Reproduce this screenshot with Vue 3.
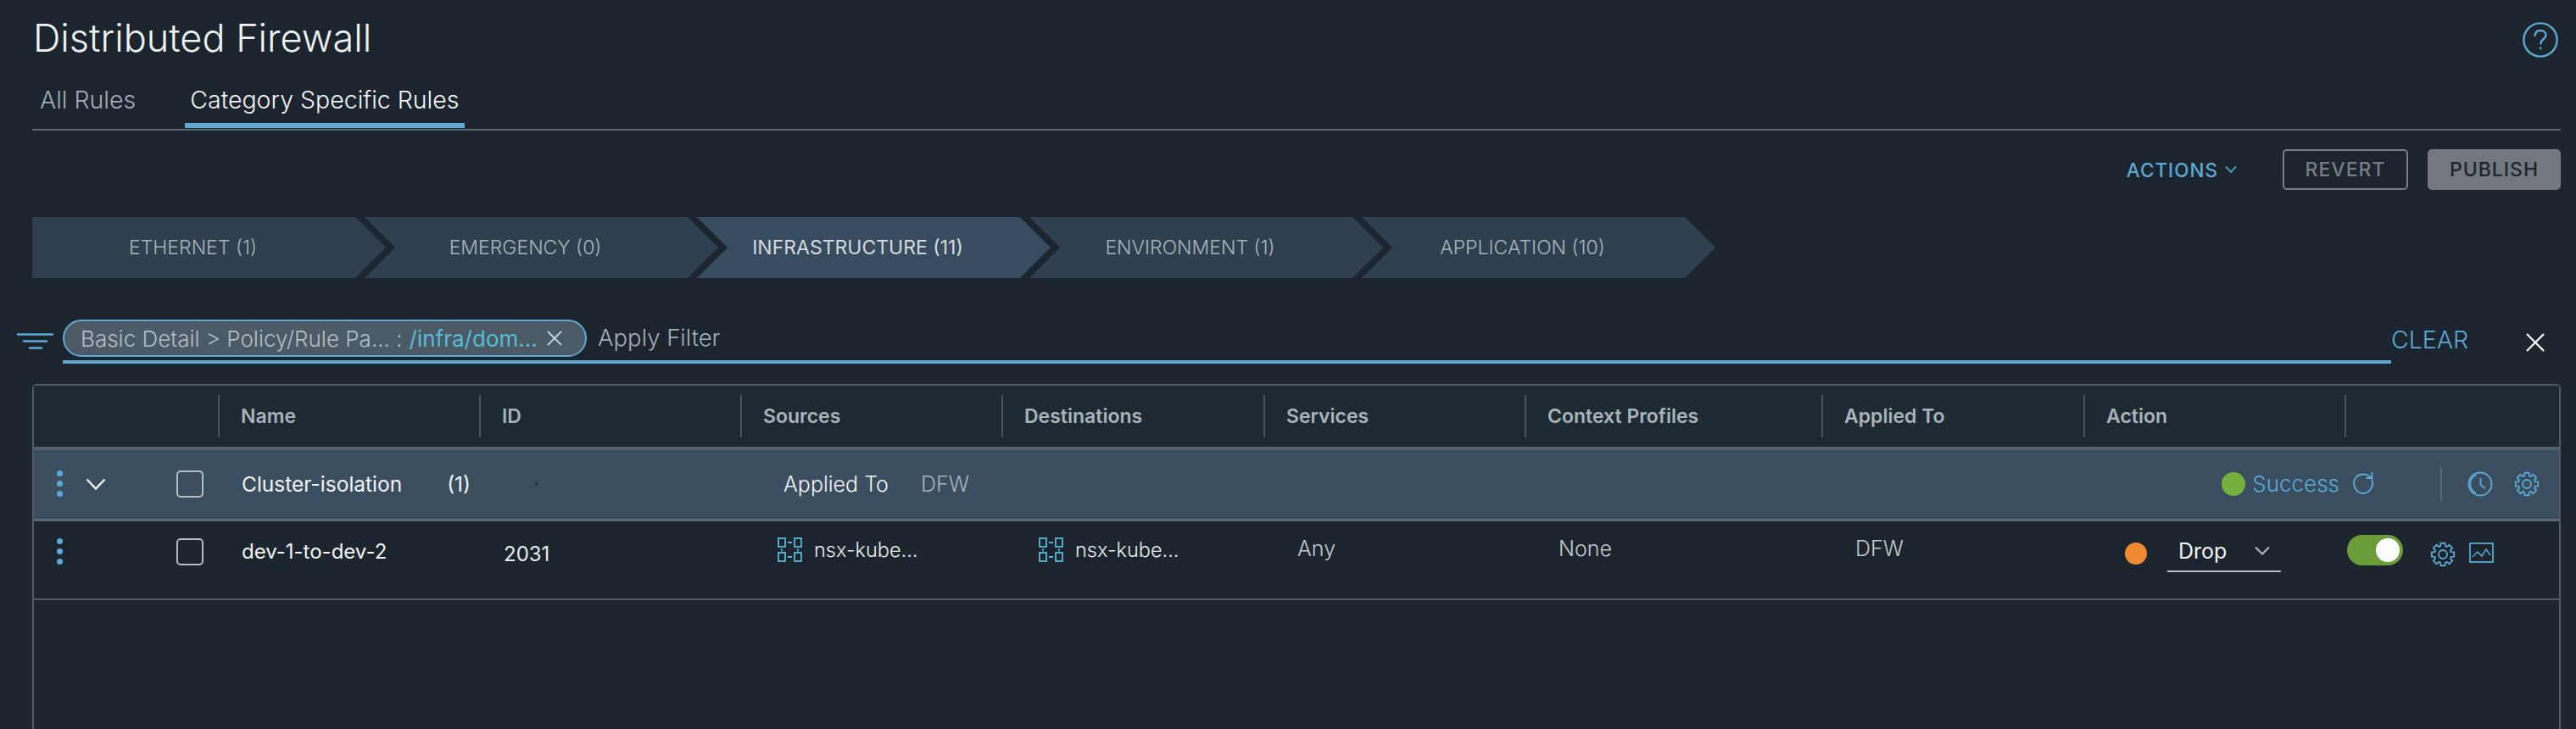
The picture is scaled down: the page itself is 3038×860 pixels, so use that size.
<script setup>
const categories = [
  { label: 'ETHERNET (1)' },
  { label: 'EMERGENCY (0)' },
  { label: 'INFRASTRUCTURE (11)', active: true },
  { label: 'ENVIRONMENT (1)' },
  { label: 'APPLICATION (10)' },
]
const columns = ['', 'Name', 'ID', 'Sources', 'Destinations', 'Services', 'Context Profiles', 'Applied To', 'Action', '']

// gear outline, 8 teeth
function gearPath(cx, cy, ro, ri) {
  const pts = []
  for (let i = 0; i < 8; i++) {
    const a = (i * Math.PI) / 4
    const w = 0.2
    const w2 = 0.3
    pts.push([a - w2, ri], [a - w, ro], [a + w, ro], [a + w2, ri])
  }
  return (
    pts
      .map(([a, r], i) => `${i ? 'L' : 'M'}${(cx + r * Math.sin(a)).toFixed(2)} ${(cy - r * Math.cos(a)).toFixed(2)}`)
      .join(' ') + ' Z'
  )
}
const gear = gearPath(15, 15, 13.5, 10)
</script>

<template>
  <div class="page">
    <header class="title-row">
      <h1>Distributed Firewall</h1>
      <svg class="help" width="42" height="42" viewBox="0 0 42 42" fill="none" stroke="#5aa9d6" stroke-width="2.4">
        <circle cx="21" cy="21" r="19.6" />
        <path d="M14.5 16c.4-4 3.2-6 6.6-6 3.6 0 6.4 2.400 6.400 5.600 0 4.600-6.200 4.800-6.200 9.600" stroke-linecap="round" />
        <circle cx="21.200" cy="31" r="1.400" fill="#5aa9d6" stroke="none" />
      </svg>
    </header>

    <nav class="tabs">
      <a class="tab">All Rules</a>
      <a class="tab active">Category Specific Rules</a>
    </nav>

    <div class="toolbar">
      <span class="actions">
        ACTIONS
        <svg width="14" height="10" viewBox="0 0 14 10" fill="none" stroke="#5aa9d6" stroke-width="1.800"><path d="M1 1.500l6 6.500 6-6.500" /></svg>
      </span>
      <button class="btn outline">REVERT</button>
      <button class="btn solid">PUBLISH</button>
    </div>

    <div class="steps">
      <div
        v-for="(c, i) in categories"
        :key="c.label"
        class="step"
        :class="{ first: i === 0, active: c.active }"
      >
        {{ c.label }}
      </div>
    </div>

    <div class="filter-row">
      <svg class="filter-icon" width="43" height="20" viewBox="0 0 43 20" fill="none" stroke="#5aa9d6" stroke-width="2.400">
        <path d="M0 1.500h43M7 9.500h29M14 17.500h16" />
      </svg>
      <div class="filter-field">
        <span class="chip">
          <span class="chip-key">Basic Detail &gt; Policy/Rule Pa... :</span>
          <span class="chip-val">/infra/dom...</span>
          <svg width="20" height="20" viewBox="0 0 20 20" fill="none" stroke="#c9d0d6" stroke-width="1.800"><path d="M2 2l16 16M18 2L2 18" /></svg>
        </span>
        <span class="placeholder">Apply Filter</span>
      </div>
      <span class="clear">CLEAR</span>
      <svg class="close" width="24" height="24" viewBox="0 0 24 24" fill="none" stroke="#f2f4f5" stroke-width="2.400"><path d="M2 2l20 20M22 2L2 22" /></svg>
    </div>

    <section class="table">
      <div class="grid head">
        <div v-for="(col, i) in columns" :key="i" class="th">{{ col }}</div>
      </div>

      <div class="grid group">
        <div class="controls">
          <span class="dots"><i></i><i></i><i></i></span>
          <svg class="caret" width="24" height="14" viewBox="0 0 24 14" fill="none" stroke="#f2f4f5" stroke-width="2.400"><path d="M1.500 1.500L12 12.500 22.500 1.500" /></svg>
          <span class="check"></span>
        </div>
        <div class="cell group-name"><span>Cluster-isolation</span><span>(1)</span></div>
        <div class="cell"><i class="speck"></i></div>
        <div class="cell applied"><span>Applied To</span><span class="muted">DFW</span></div>
        <div class="status">
          <i class="dot green"></i>
          <span class="ok">Success</span>
          <svg class="refresh" width="24" height="29" viewBox="0 0 24 29" fill="none" stroke="#5aa9d6" stroke-width="1.800">
            <path d="M22 9.500c.8 1.500 1 3 1 4.500 0 6.500-5 12-11 12S1 20.500 1 14 6 3.500 12 3.500c3 0 6 1 9.500 3.500" />
            <path d="M22.500 1v7h-7" />
          </svg>
          <i class="vsep"></i>
          <svg class="clock" width="30" height="30" viewBox="0 0 30 30" fill="none" stroke="#5aa9d6" stroke-width="1.800">
            <circle cx="15" cy="15" r="13.500" />
            <path d="M10 4.500A11.500 11.500 0 0 0 10 25.500" />
            <path d="M15.500 8v8l5 4" />
          </svg>
          <svg class="gear" width="30" height="30" viewBox="0 0 30 30" fill="none" stroke="#5aa9d6" stroke-width="1.800" stroke-linejoin="round">
            <path :d="gear" /><circle cx="15" cy="15" r="5" />
          </svg>
        </div>
      </div>

      <div class="grid rule">
        <div class="controls">
          <span class="dots"><i></i><i></i><i></i></span>
          <span class="caret-space"></span>
          <span class="check"></span>
        </div>
        <div class="cell name">dev-1-to-dev-2</div>
        <div class="cell rule-id">2031</div>
        <div class="cell group-ref">
          <svg width="30" height="29" viewBox="0 0 30 29" fill="none" stroke="#58b8d6" stroke-width="1.800">
            <rect x="1" y="1" width="8" height="10" /><rect x="20" y="1" width="8" height="10" />
            <rect x="1" y="18" width="8" height="10" /><rect x="20" y="18" width="8" height="10" />
            <path d="M12 6h5M12 23h5M5 13.500v3M24 13.500v3" />
          </svg>
          <span>nsx-kube...</span>
        </div>
        <div class="cell group-ref dest">
          <svg width="30" height="29" viewBox="0 0 30 29" fill="none" stroke="#58b8d6" stroke-width="1.800">
            <rect x="1" y="1" width="8" height="10" /><rect x="20" y="1" width="8" height="10" />
            <rect x="1" y="18" width="8" height="10" /><rect x="20" y="18" width="8" height="10" />
            <path d="M12 6h5M12 23h5M5 13.500v3M24 13.500v3" />
          </svg>
          <span>nsx-kube...</span>
        </div>
        <div class="cell plain">Any</div>
        <div class="cell plain">None</div>
        <div class="cell plain">DFW</div>
        <div class="cell action">
          <i class="dot orange"></i>
          <span class="select">
            Drop
            <svg width="18" height="11" viewBox="0 0 18 11" fill="none" stroke="#b5bcc3" stroke-width="2"><path d="M1 1.500l8 8 8-8" /></svg>
          </span>
        </div>
        <div class="cell tail">
          <span class="toggle"><i></i></span>
          <svg class="gear" width="30" height="30" viewBox="0 0 30 30" fill="none" stroke="#5aa9d6" stroke-width="1.800" stroke-linejoin="round">
            <path :d="gear" /><circle cx="15" cy="15" r="5" />
          </svg>
          <svg class="chart" width="29" height="24" viewBox="0 0 29 24" fill="none" stroke="#5aa9d6" stroke-width="1.800">
            <rect x="1" y="1" width="27" height="22" />
            <path d="M4 17l6-6 5 5 5-8 5 7" stroke-width="1.500" />
          </svg>
        </div>
      </div>
    </section>
  </div>
</template>

<style>
html, body {
  margin: 0;
  background: #1c252d;
}
</style>

<style scoped>
.page {
  box-sizing: border-box;
  height: 860px;
  padding: 0 18px 0 38px;
  display: flex;
  flex-direction: column;
  overflow: hidden;
  background: #1c252d;
  color: #e9ecee;
  font-family: Inter, "Noto Sans", sans-serif;
}

.title-row {
  height: 95px;
  display: flex;
  align-items: flex-start;
  justify-content: space-between;
  padding-right: 3px;
  box-sizing: border-box;
}
.title-row h1 {
  margin: 20px 0 0 1px;
  font-size: 45px;
  line-height: 50px;
  font-weight: 300;
  color: #eef1f2;
}
.help { margin-top: 26px; }

.tabs {
  height: 59px;
  box-sizing: border-box;
  display: flex;
  align-items: flex-end;
  gap: 52px;
  padding-left: 3px;
  border-bottom: 2px solid #5a6873;
}
.tab {
  padding: 0 6px;
  height: 48px;
  line-height: 30px;
  margin-bottom: 1px;
  font-size: 28.5px;
  font-weight: 300;
  color: #a3adb5;
  box-sizing: border-box;
}
.tab.active {
  color: #f2f4f5;
  border-bottom: 6px solid #5fa9d4;
}

.toolbar {
  margin-top: 22px;
  height: 48px;
  display: flex;
  justify-content: flex-end;
  align-items: center;
}
.actions {
  display: flex;
  align-items: center;
  gap: 8px;
  margin-right: 54px;
  color: #5aa9d6;
  font-size: 22.5px;
  font-weight: 500;
  letter-spacing: 1px;
}
.btn {
  height: 48px;
  box-sizing: border-box;
  border-radius: 5px;
  font: 500 23px Inter, sans-serif;
  letter-spacing: 1px;
  padding: 0;
}
.btn.outline {
  width: 148px;
  background: transparent;
  border: 2px solid #767e84;
  color: #767e84;
}
.btn.solid {
  width: 157px;
  margin-left: 23px;
  background: #72787d;
  border: 0;
  color: #1c252d;
}

.steps {
  margin-top: 32px;
  display: flex;
}
.step {
  box-sizing: border-box;
  width: 417px;
  height: 72px;
  margin-right: -25px;
  padding-right: 38px;
  display: flex;
  align-items: center;
  justify-content: center;
  background: #2e4050;
  color: #a9b3bb;
  font-size: 23px;
  font-weight: 300;
  clip-path: polygon(0 0, calc(100% - 36px) 0, 100% 50%, calc(100% - 36px) 100%, 0 100%, 36px 50%);
}
.step.first {
  clip-path: polygon(0 0, calc(100% - 36px) 0, 100% 50%, calc(100% - 36px) 100%, 0 100%);
}
.step.active {
  background: #374c5e;
  color: #d5dade;
  font-weight: 400;
}

.filter-row {
  margin: 49px 0 0 -18px;
  height: 52px;
  display: flex;
  align-items: flex-start;
}
.filter-icon { margin: 16px 11px 0 0; flex: none; }
.filter-field {
  flex: 1;
  height: 52px;
  box-sizing: border-box;
  display: flex;
  align-items: flex-start;
  gap: 13px;
  border-bottom: 4px solid #5fa9d4;
}
.chip {
  box-sizing: border-box;
  width: 618px;
  height: 44px;
  display: flex;
  align-items: center;
  padding: 0 26px 0 19px;
  border: 2px solid #5fa9d4;
  border-radius: 22px;
  background: #4c5a66;
  font-size: 26px;
  font-weight: 300;
  white-space: nowrap;
}
.chip-key { color: #b4bcc3; }
.chip-val { color: #58bcd8; margin-left: 8px; font-weight: 400; }
.chip svg { margin-left: auto; }
.placeholder {
  line-height: 42px;
  font-size: 27.5px;
  font-weight: 300;
  color: #a3adb5;
}
.clear {
  width: 158px;
  line-height: 48px;
  font-size: 28.5px;
  font-weight: 300;
  color: #5aa9d6;
}
.close { margin: 15px 18px 0 0; flex: none; }

.table {
  margin-top: 24px;
  flex: 1;
  border: solid #4d5963;
  border-width: 2px 2px 0;
  border-radius: 5px 5px 0 0;
}
.grid {
  display: grid;
  grid-template-columns: 219px 308px 308px 308px 309px 308px 350px 309px 308px 1fr;
}
.head {
  height: 72px;
  align-items: center;
  background: #1e2a32;
  border-bottom: 4px solid #55626e;
}
.th {
  height: 50px;
  line-height: 50px;
  padding-left: 25px;
  border-right: 2px solid #48555f;
  box-sizing: border-box;
  font-size: 23px;
  font-weight: 600;
  color: #a9b3bb;
}
.th:last-child { border-right: 0; }

.group {
  height: 84px;
  box-sizing: border-box;
  padding-bottom: 2px;
  align-items: center;
  background: #3a4e60;
  border-bottom: 3px solid #5a6873;
}
.rule {
  height: 93px;
  box-sizing: border-box;
  padding-bottom: 20px;
  align-items: center;
  border-bottom: 2px solid #4d5963;
}
.controls {
  display: flex;
  align-items: center;
  padding-left: 27px;
}
.dots {
  display: flex;
  flex-direction: column;
  gap: 5px;
}
.dots i {
  width: 7px;
  height: 7px;
  border-radius: 50%;
  background: #5aa9d6;
}
.caret { margin-left: 27px; }
.caret-space { width: 24px; margin-left: 27px; }
.check {
  width: 32px;
  height: 32px;
  margin-left: 83px;
  box-sizing: border-box;
  border: 2px solid #b5bcc3;
  border-radius: 5px;
}
.cell {
  font-size: 25px;
  font-weight: 300;
  padding-left: 25px;
  white-space: nowrap;
}
.group-name {
  display: flex;
  justify-content: space-between;
  padding-right: 12px;
  padding-left: 26px;
  color: #f2f4f5;
  font-weight: 400;
  font-size: 24.5px;
}
.speck {
  display: block;
  width: 3px;
  height: 3px;
  margin-left: 39px;
  border-radius: 50%;
  background: #1c252d;
}
.applied {
  grid-column: span 2;
  display: flex;
  align-items: baseline;
  gap: 38px;
  padding-left: 49px;
  color: #f2f4f5;
}
.muted { color: #a9b3bb; }
.status {
  grid-column: 6 / -1;
  display: flex;
  align-items: center;
  justify-content: flex-end;
  padding-right: 23px;
}
.dot {
  display: block;
  width: 28px;
  height: 28px;
  border-radius: 50%;
  flex: none;
}
.green { background: #74b03c; }
.orange { background: #ef8a33; width: 26px; height: 26px; margin-top: 5px; }
.ok { margin-left: 8px; font-size: 26px; color: #5aa9d6; font-weight: 300; }
.refresh { margin-left: 16px; }
.vsep {
  width: 2px;
  height: 40px;
  margin: 0 30px 0 79px;
  background: #5a6873;
}
.clock { margin-right: 25px; }

.name { padding-left: 26px; color: #f2f4f5; font-weight: 400; font-size: 24px; }
.rule-id { padding-left: 27px; font-weight: 400; font-size: 24px; margin-top: 6px; }
.group-ref {
  display: flex;
  align-items: center;
  gap: 13px;
  padding-left: 42px;
  margin-top: -4px;
  font-size: 23.5px;
  color: #e9ecee;
}
.plain {
  margin-top: -8px;
  padding-left: 38px;
  color: #c3cad0;
}
.action {
  display: flex;
  align-items: center;
  gap: 24px;
  padding-left: 47px;
}
.select {
  width: 134px;
  height: 48px;
  box-sizing: border-box;
  display: flex;
  align-items: center;
  justify-content: space-between;
  padding: 0 13px;
  border-bottom: 2px solid #b5bcc3;
  color: #f2f4f5;
  font-weight: 400;
}
.tail {
  display: flex;
  align-items: center;
  padding-left: 1px;
  margin-top: -4px;
}
.toggle {
  width: 66px;
  height: 36px;
  box-sizing: border-box;
  padding: 4px;
  display: flex;
  justify-content: flex-end;
  border-radius: 18px;
  background: #6b9e3a;
}
.toggle i {
  width: 28px;
  height: 28px;
  border-radius: 50%;
  background: #fff;
}
.tail .gear { margin-left: 32px; margin-top: 10px; }
.chart { margin-left: 16px; margin-top: 6px; }
</style>
